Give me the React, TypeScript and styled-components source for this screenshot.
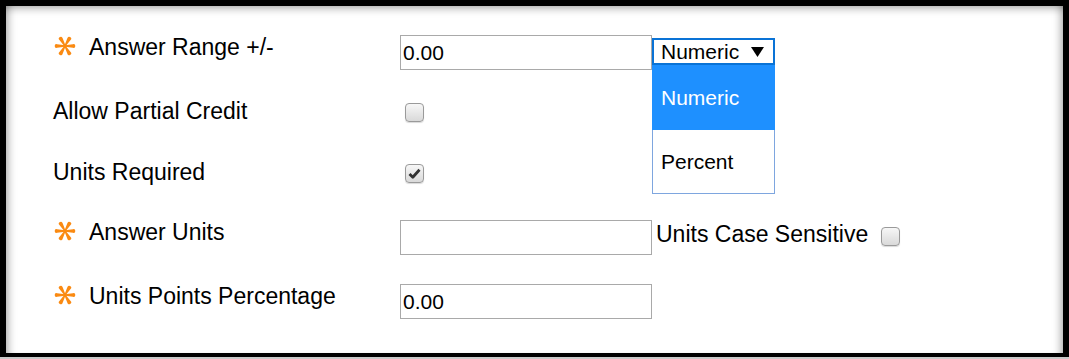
import styled, { createGlobalStyle } from "styled-components";

const GlobalStyle = createGlobalStyle`
  html, body {
    margin: 0;
    padding: 0;
    background: #c9c9c9;
  }
  body {
    font-family: "Liberation Sans", Arial, sans-serif;
  }
`;

const Frame = styled.div`
  box-sizing: border-box;
  width: 1069px;
  height: 357px;
  border: 6px solid #000;
  border-bottom-width: 4px;
  background: #fff;
  box-shadow: inset 0 9px 8px -7px rgba(0, 0, 0, 0.35),
    inset 9px 0 8px -7px rgba(0, 0, 0, 0.35),
    inset -9px 0 8px -7px rgba(0, 0, 0, 0.35);
`;

const Form = styled.div`
  display: flex;
  flex-direction: column;
  gap: 29px;
  padding: 29px 0 0 47px;
`;

const Row = styled.div<{ h: number }>`
  display: grid;
  grid-template-columns: 347px 1fr;
  height: ${(props) => props.h}px;
  align-items: start;
`;

const Label = styled.div`
  display: flex;
  align-items: center;
  font-size: 23px;
  line-height: 24px;
  color: #000;
  white-space: nowrap;
`;

const Star = styled.svg`
  width: 22px;
  height: 22px;
  margin: -2px 13px 0 1px;
  flex-shrink: 0;
`;

const Controls = styled.div`
  display: flex;
  align-items: flex-start;
`;

const TextInput = styled.div`
  box-sizing: border-box;
  width: 252px;
  height: 35px;
  border: 1px solid #a9a9a9;
  padding: 0 2px;
  font-size: 21px;
  line-height: 33px;
  color: #000;
`;

const SelectWrap = styled.div`
  position: relative;
  margin-top: 3px;
`;

const SelectBox = styled.div`
  box-sizing: border-box;
  width: 123px;
  height: 27px;
  border: 2px solid #0a73d6;
  display: flex;
  align-items: center;
  justify-content: space-between;
  padding: 0 9px 0 7px;
  font-size: 21px;
  color: #000;
`;

const OptionList = styled.div`
  position: absolute;
  top: 27px;
  left: 0;
  box-sizing: border-box;
  width: 123px;
  border: 1px solid #7ea6df;
  border-top: none;
  background: #fff;
`;

const Option = styled.div<{ active?: boolean }>`
  height: ${(props) => (props.active ? 65 : 63)}px;
  display: flex;
  align-items: center;
  font-size: 21px;
  color: ${(props) => (props.active ? "#fff" : "#000")};
  background: ${(props) => (props.active ? "#1e90ff" : "#fff")};
  margin: ${(props) => (props.active ? "0 -1px" : "0")};
  padding-left: ${(props) => (props.active ? 9 : 8)}px;
`;

const Check = styled.div<{ offset: number; gap: number }>`
  box-sizing: border-box;
  width: 19px;
  height: 19px;
  margin: ${(props) => props.offset}px 0 0 ${(props) => props.gap}px;
  border: 1px solid #9a9a9a;
  border-radius: 4px;
  background: linear-gradient(#f7f7f7, #d9d9d9);
  box-shadow: 0 1px 1px rgba(0, 0, 0, 0.15);
  display: flex;
  align-items: center;
  justify-content: center;
`;

const SideLabel = styled.div`
  font-size: 23px;
  line-height: 24px;
  color: #000;
  margin: 2px 0 0 4px;
  white-space: nowrap;
`;

function Asterisk() {
  const spoke = "M9.4 10 L8.3 2.8 A1.75 1.75 0 1 1 11.7 2.8 L10.6 10 Z";
  return (
    <Star viewBox="0 0 20 20">
      <g fill="#fa8a12">
        {[30, 90, 150, 210, 270, 330].map((a) => (
          <path key={a} d={spoke} transform={`rotate(${a} 10 10)`} />
        ))}
        <circle cx="10" cy="10" r="1.3" />
      </g>
    </Star>
  );
}

function Checkbox({ checked, offset, gap = 5 }: { checked?: boolean; offset: number; gap?: number }) {
  return (
    <Check offset={offset} gap={gap}>
      {checked ? (
        <svg width="13" height="11" viewBox="0 0 13 11">
          <path d="M1.5 6 L4.8 9.3 L11.5 1.8" fill="none" stroke="#333" strokeWidth="2.8" strokeLinejoin="round" />
        </svg>
      ) : null}
    </Check>
  );
}

export default function App() {
  return (
    <>
      <GlobalStyle />
      <Frame>
        <Form>
          <Row h={35}>
            <Label>
              <Asterisk />
              Answer Range +/-
            </Label>
            <Controls>
              <TextInput>0.00</TextInput>
              <SelectWrap>
                <SelectBox>
                  Numeric
                  <svg width="13" height="10" viewBox="0 0 13 10">
                    <path d="M0 0 H13 L6.5 10 Z" fill="#000" />
                  </svg>
                </SelectBox>
                <OptionList>
                  <Option active>Numeric</Option>
                  <Option>Percent</Option>
                </OptionList>
              </SelectWrap>
            </Controls>
          </Row>
          <Row h={32}>
            <Label>Allow Partial Credit</Label>
            <Controls>
              <Checkbox offset={4} />
            </Controls>
          </Row>
          <Row h={31}>
            <Label>Units Required</Label>
            <Controls>
              <Checkbox checked offset={4} />
            </Controls>
          </Row>
          <Row h={35}>
            <Label>
              <Asterisk />
              Answer Units
            </Label>
            <Controls>
              <TextInput />
              <SideLabel>Units Case Sensitive</SideLabel>
              <Checkbox offset={7} gap={13} />
            </Controls>
          </Row>
          <Row h={35}>
            <Label>
              <Asterisk />
              Units Points Percentage
            </Label>
            <Controls>
              <TextInput>0.00</TextInput>
            </Controls>
          </Row>
        </Form>
      </Frame>
    </>
  );
}
